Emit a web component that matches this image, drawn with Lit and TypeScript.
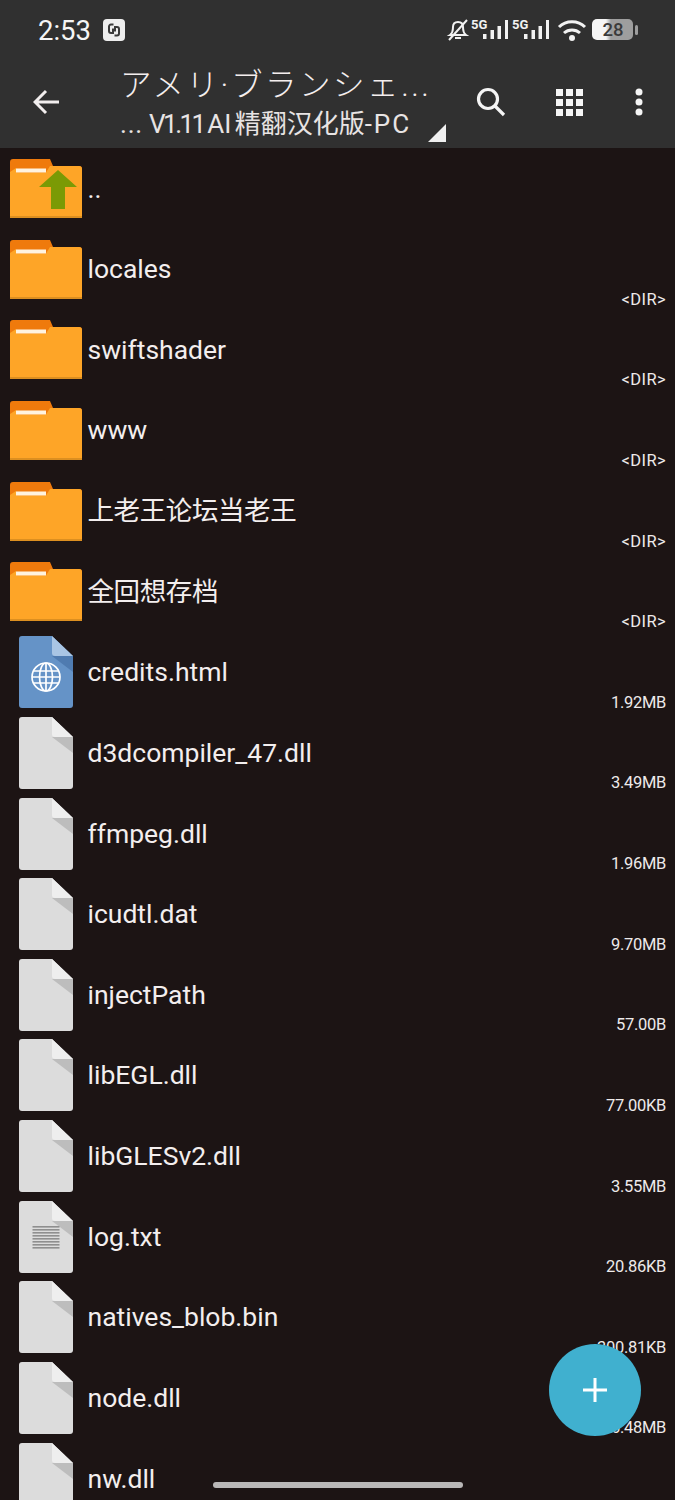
import { LitElement, html, css, svg } from 'lit';
import { customElement } from 'lit/decorators.js';

type Kind = 'up' | 'folder' | 'html' | 'file' | 'text';
interface Entry { name: string; size?: string; kind: Kind; }

const ENTRIES: Entry[] = [
  { name: '..', kind: 'up' },
  { name: 'locales', size: '<DIR>', kind: 'folder' },
  { name: 'swiftshader', size: '<DIR>', kind: 'folder' },
  { name: 'www', size: '<DIR>', kind: 'folder' },
  { name: '上老王论坛当老王', size: '<DIR>', kind: 'folder' },
  { name: '全回想存档', size: '<DIR>', kind: 'folder' },
  { name: 'credits.html', size: '1.92MB', kind: 'html' },
  { name: 'd3dcompiler_47.dll', size: '3.49MB', kind: 'file' },
  { name: 'ffmpeg.dll', size: '1.96MB', kind: 'file' },
  { name: 'icudtl.dat', size: '9.70MB', kind: 'file' },
  { name: 'injectPath', size: '57.00B', kind: 'file' },
  { name: 'libEGL.dll', size: '77.00KB', kind: 'file' },
  { name: 'libGLESv2.dll', size: '3.55MB', kind: 'file' },
  { name: 'log.txt', size: '20.86KB', kind: 'text' },
  { name: 'natives_blob.bin', size: '300.81KB', kind: 'file' },
  { name: 'node.dll', size: '16.48MB', kind: 'file' },
  { name: 'nw.dll', kind: 'file' },
];

const folderIcon = (up: boolean) => html`
  <svg class="folder" viewBox="0 0 72 59" width="72" height="59">
    <path d="M0 3a3 3 0 0 1 3-3h37l3 7h26a3 3 0 0 1 3 3v10H0z" fill="#ef7a0c" />
    <path d="M0 13l6-4v4.500h30l4-6.500h29a3 3 0 0 1 3 3v47a1 1 0 0 1-1 1H1a1 1 0 0 1-1-1z" fill="#fea527" />
    <rect x="6" y="9.500" width="30" height="4" fill="#fff3df" />
    <rect y="57" width="72" height="2" fill="#dc8f20" />
    ${up ? svg`<path d="M48 11l19 17H55v22H41V28H29z" fill="#7b9a05" />` : ''}
  </svg>`;

const fileIcon = (kind: Kind) => {
  const blue = kind === 'html';
  const body = blue ? '#6593c7' : '#dcdcdc';
  const flap = blue ? '#a9c5e4' : '#eeeeee';
  const shade = blue ? '#4f7bb0' : '#bdbdbd';
  const lines = [25, 28, 31, 34, 37, 40, 43, 46];
  return html`
    <svg class="file" viewBox="0 0 54 72" width="54" height="72">
      <path d="M3 0h30l21 20v49a3 3 0 0 1-3 3H3a3 3 0 0 1-3-3V3a3 3 0 0 1 3-3z" fill=${body} />
      <path d="M33 20h21v16z" fill=${shade} />
      <path d="M33 0l21 20H36a3 3 0 0 1-3-3z" fill=${flap} />
      ${blue
        ? svg`<g fill="none" stroke="#fff" stroke-width="1.700">
            <circle cx="27" cy="41" r="14" />
            <ellipse cx="27" cy="41" rx="6.500" ry="14" />
            <path d="M27 27v28M13 41h28M14.500 35h25M14.500 47h25" />
          </g>`
        : ''}
      ${kind === 'text'
        ? lines.map((y) => svg`<rect x="13.500" y=${y} width="27" height="1.600" fill="#8f8f8f" />`)
        : ''}
    </svg>`;
};

const signal = (x: number) => svg`
  <g transform="translate(${x} 0)" fill="#f2f2f2">
    <text x="0" y="10" font-size="13" font-weight="700" font-family="Roboto, sans-serif">5G</text>
    <rect x="12" y="15" width="3.500" height="5" />
    <rect x="19.500" y="11" width="3.500" height="9" />
    <rect x="26.500" y="7" width="3.500" height="13" />
    <rect x="34" y="1" width="3" height="19" />
  </g>`;

@customElement('app-root')
export class AppRoot extends LitElement {
  static styles = css`
    :host {
      display: block;
      position: relative;
      width: 675px;
      height: 1500px;
      overflow: hidden;
      background: #1c1414;
      color: #f3eeee;
      font-family: Roboto, 'Noto Sans CJK SC', sans-serif;
    }

    .top {
      height: 148px;
      margin-bottom: 2px;
      background: #303030;
      display: flex;
      flex-direction: column;
    }

    .status {
      height: 60px;
      flex: none;
      display: flex;
      align-items: center;
      padding: 0 37px 0 38px;
    }

    .clock {
      font: 27.500px Roboto, sans-serif;
      color: #f5f5f5;
    }

    .badge {
      margin-left: 12px;
      width: 22px;
      height: 22px;
      border-radius: 4px;
      background: #eeeeee;
      display: flex;
      align-items: center;
      justify-content: center;
    }

    .status-right {
      margin-left: auto;
      display: block;
    }

    .bar {
      height: 84px;
      display: flex;
      align-items: center;
    }

    .back {
      width: 120px;
      padding-left: 33px;
      box-sizing: border-box;
      flex: none;
      display: flex;
    }

    .titles {
      width: 326px;
      flex: none;
      position: relative;
      align-self: flex-start;
      padding-top: 6px;
    }

    .title {
      font: 300 31.500px/39px Roboto, 'Noto Sans CJK JP', sans-serif;
      letter-spacing: 2.550px;
      white-space: nowrap;
      color: #f4eeee;
    }

    .sub {
      font-size: 26px;
      line-height: 38px;
      word-spacing: -3px;
      white-space: nowrap;
      color: #e8e4e4;
    }

    .lead {
      letter-spacing: 0.800px;
      margin-right: 6px;
    }

    .version {
      letter-spacing: -2.500px;
    }

    .tail {
      letter-spacing: 2px;
    }

    .corner {
      position: absolute;
      right: 0;
      top: 64px;
      width: 18px;
      height: 18px;
      background: #f0f0f0;
      clip-path: polygon(100% 0, 100% 100%, 0 100%);
    }

    .actions {
      flex: 1;
      display: flex;
      align-items: center;
      padding-left: 30px;
    }

    .grid {
      margin-left: 50px;
    }

    .dots {
      margin-left: 52px;
    }

    .row {
      height: 80.630px;
      display: flex;
      position: relative;
    }

    .thumb {
      width: 87.500px;
      flex: none;
    }

    .folder {
      display: block;
      margin: 9px 0 0 10px;
    }

    .file {
      display: block;
      margin: 2.500px 0 0 19px;
    }

    .name {
      padding-top: 20.500px;
      font-size: 26.500px;
      line-height: 36px;
      white-space: nowrap;
    }

    .name.cjk {
      letter-spacing: -0.400px;
    }

    .size {
      position: absolute;
      right: 9px;
      top: 59px;
      font-size: 16.500px;
      line-height: 20px;
      letter-spacing: -0.300px;
      color: #eeeaea;
    }

    .size.dir {
      letter-spacing: 0.400px;
    }

    .fab {
      position: absolute;
      left: 549px;
      top: 1344px;
      width: 92px;
      height: 92px;
      border-radius: 50%;
      background: #40b0cf;
      display: flex;
      align-items: center;
      justify-content: center;
    }

    .home {
      position: absolute;
      left: 213px;
      top: 1482px;
      width: 250px;
      height: 6px;
      border-radius: 3px;
      background: #b9b7b7;
    }
  `;

  render() {
    return html`
      <div class="top">
        <div class="status">
          <span class="clock">2:53</span>
          <span class="badge">
            <svg viewBox="0 0 14 14" width="14" height="14" fill="none" stroke="#3a3a3a" stroke-width="2">
              <path d="M6.500 1.500H4a2 2 0 0 0-2 2V8a2 2 0 0 0 2 2h2V5.500" />
              <path d="M7.500 12.500H10a2 2 0 0 0 2-2V6a2 2 0 0 0-2-2H8v4.500" />
            </svg>
          </span>
          <svg class="status-right" viewBox="0 0 192 24" width="192" height="24">
            <defs>
              <linearGradient id="level">
                <stop offset="0.340" stop-color="#f5f5f5" />
                <stop offset="0.460" stop-color="#9e9e9e" />
              </linearGradient>
            </defs>
            <g fill="none" stroke="#f2f2f2" stroke-width="2">
              <path d="M4 17c3-2 3-5 3-8 0-3 2-5 5-5s5 2 5 5c0 3 0 6 3 8z" />
              <path d="M9 20h6" />
              <path d="M3 22L21 2" />
            </g>
            <g transform="translate(25 1)">${signal(0)}</g>
            <g transform="translate(66 1)">${signal(0)}</g>
            <g transform="translate(112 2)" fill="none" stroke="#f2f2f2" stroke-width="3">
              <path d="M1 7c7-7 19-7 26 0" />
              <path d="M6 13c4.500-4 11.500-4 16 0" />
            </g>
            <circle cx="126" cy="20" r="3" fill="#f2f2f2" />
            <rect x="146" y="1" width="41" height="21" rx="5" fill="url(#level)" />
            <text x="167" y="18" text-anchor="middle" font-size="18.500" font-weight="500" font-family="Roboto, sans-serif" fill="#3a3a3a">28</text>
            <rect x="189" y="7" width="3" height="10" rx="1.500" fill="#9e9e9e" />
          </svg>
        </div>
        <div class="bar">
          <span class="back">
            <svg viewBox="0 0 26 26" width="26" height="26" fill="none" stroke="#f2eeee" stroke-width="3">
              <path d="M26 13H3M13 2L2 13l11 11" />
            </svg>
          </span>
          <div class="titles">
            <div class="title">アメリ·ブランシェ...</div>
            <div class="sub"><span class="lead">...</span><span class="version">V1.11</span> AI 精翻汉化版<span class="tail">-PC</span></div>
            <span class="corner"></span>
          </div>
          <div class="actions">
            <svg viewBox="0 0 30 30" width="30" height="30" fill="none" stroke="#f5f5f5" stroke-width="3.200">
              <circle cx="12" cy="12" r="9.500" />
              <path d="M19 19l9 9" />
            </svg>
            <svg class="grid" viewBox="0 0 27 27" width="27" height="27" fill="#f5f5f5">
              ${[0, 10, 20].map((y) =>
                [0, 10, 20].map((x) => svg`<rect x=${x} y=${y} width="7" height="7" />`),
              )}
            </svg>
            <svg class="dots" viewBox="0 0 8 28" width="8" height="28" fill="#f5f5f5">
              <circle cx="4" cy="4" r="3.500" />
              <circle cx="4" cy="14" r="3.500" />
              <circle cx="4" cy="24" r="3.500" />
            </svg>
          </div>
        </div>
      </div>
      ${ENTRIES.map(
        (e) => html`
          <div class="row">
            <div class="thumb">
              ${e.kind === 'up' || e.kind === 'folder' ? folderIcon(e.kind === 'up') : fileIcon(e.kind)}
            </div>
            <div class="name ${/[^\x00-\x7f]/.test(e.name) ? 'cjk' : ''}">${e.name}</div>
            ${e.size ? html`<div class="size ${e.size === '<DIR>' ? 'dir' : ''}">${e.size}</div>` : ''}
          </div>
        `,
      )}
      <div class="fab">
        <svg viewBox="0 0 24 24" width="24" height="24" fill="#fff">
          <rect y="10.500" width="24" height="3" />
          <rect x="10.500" width="3" height="24" />
        </svg>
      </div>
      <div class="home"></div>
    `;
  }
}
